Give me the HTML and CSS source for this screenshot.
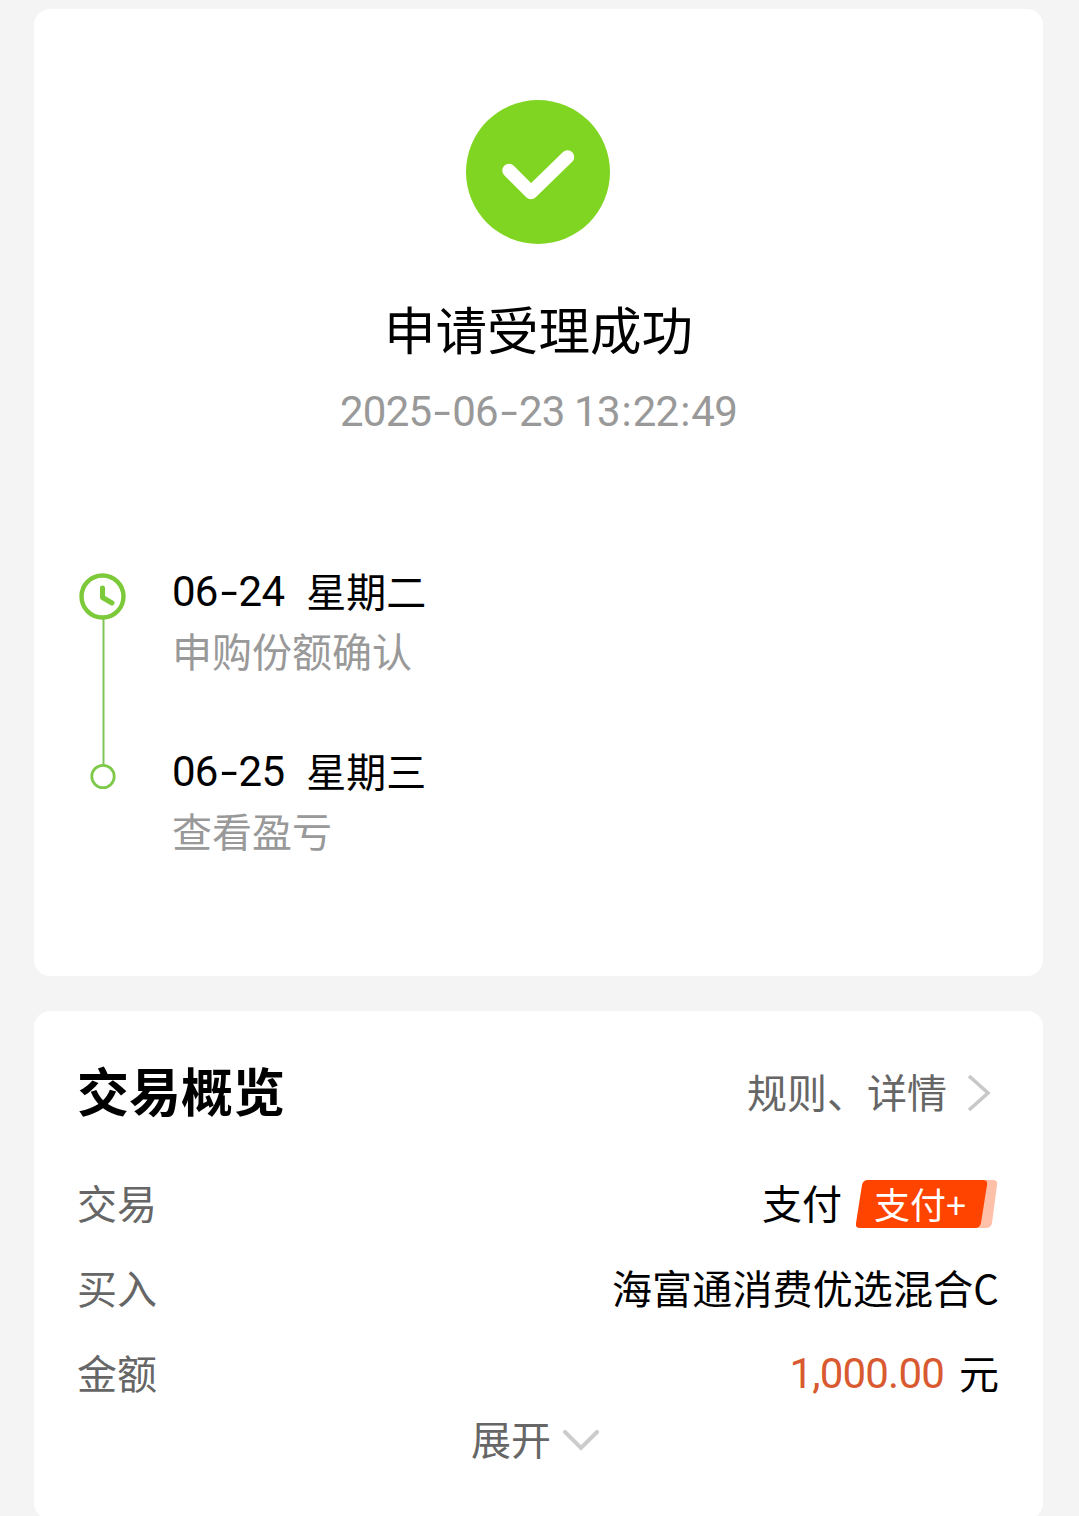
FILE: index.html
```html
<!DOCTYPE html>
<html lang="zh-CN">
<head>
    <meta charset="UTF-8">
    <title>申请受理成功</title>
    <link rel="stylesheet" href="styles.css">
</head>
<body>
<div class="page">
    <!-- 受理结果 -->
    <div class="card result">
        <svg class="success" viewBox="0 0 144 144">
            <circle cx="72" cy="72" r="72" fill="#80d522"/>
            <path d="M43 70.500L65 92.500L101.500 57" fill="none" stroke="#fff" stroke-width="13.500" stroke-linecap="round" stroke-linejoin="round"/>
        </svg>
        <h1 class="title">申请受理成功</h1>
        <p class="time num">2025<span class="dash">-</span>06<span class="dash">-</span>23 13<span class="colon">:</span>22<span class="colon">:</span>49</p>

        <!-- 进度 -->
        <div class="steps">
            <svg class="track" viewBox="0 0 48 218">
                <path d="M24.500 46V192" stroke="#7fc555" stroke-width="2"/>
                <circle cx="23.500" cy="23.500" r="21" fill="none" stroke="#7cc93a" stroke-width="4.400"/>
                <path d="M23.500 15V24.500L33 30" fill="none" stroke="#7cc93a" stroke-width="5" stroke-linecap="round" stroke-linejoin="round"/>
                <circle cx="24" cy="203.500" r="11.200" fill="none" stroke="#7fc94a" stroke-width="2.800"/>
            </svg>
            <ul class="list">
                <li>
                    <p class="day"><span class="num">06<span class="dash">-</span>24</span><span>星期二</span></p>
                    <p class="desc">申购份额确认</p>
                </li>
                <li>
                    <p class="day"><span class="num">06<span class="dash">-</span>25</span><span>星期三</span></p>
                    <p class="desc">查看盈亏</p>
                </li>
            </ul>
        </div>
    </div>

    <!-- 交易概览 -->
    <div class="card overview">
        <div class="head">
            <h2>交易概览</h2>
            <a class="more">规则、详情
                <svg class="arrow" viewBox="0 0 24 38"><path d="M2 2L21 19L2 36" fill="none" stroke="#c8c8c8" stroke-width="3.600"/></svg>
            </a>
        </div>
        <div class="row">
            <span class="label">交易</span>
            <span class="value">支付
                <span class="badge">
                    <svg class="badge-bg" viewBox="0 0 142 49">
                        <path d="M20 0H137Q142 0 141 5L136 43Q135 48 130 48H20Z" fill="#ffc0aa"/>
                        <path d="M12 0H127Q132 0 131 5L125 43Q124 48 119 48H4Q-1 48 0 43L6 5Q7 0 12 0Z" fill="#ff4400"/>
                    </svg>
                    <span class="badge-text">支付+</span>
                </span>
            </span>
        </div>
        <div class="row">
            <span class="label">买入</span>
            <span class="value fund">海富通消费优选混合C</span>
        </div>
        <div class="row">
            <span class="label">金额</span>
            <span class="value"><span class="money num">1,000.00</span>元</span>
        </div>
        <div class="expand">展开
            <svg class="down" viewBox="0 0 36 22"><path d="M2 2L18 18L34 2" fill="none" stroke="#ccc" stroke-width="4" stroke-linecap="round"/></svg>
        </div>
    </div>
</div>
</body>
</html>
```
FILE: styles.css
```css
*{
    box-sizing: border-box;
    margin: 0;
    padding: 0;
}
body{
    background-color: #f4f4f4;
    color: #000;
    font-family: "Noto Sans CJK SC", sans-serif;
    font-size: 40px;
    line-height: 60px;
}
svg{
    display: block;
    flex: none;
}
.page{
    height: 1516px;
    padding: 9px 36px 0 34px;
    overflow: hidden;
}
.card{
    background-color: #fff;
    border-radius: 16px;
}
.num{
    font-family: Roboto, "Noto Sans CJK SC", sans-serif;
    font-size: 42px;
    letter-spacing: -0.8px;
    line-height: 64px;
}

/* 受理结果 */
.result{
    height: 967px;
    padding: 91px 45px 0;
}
.success{
    width: 144px;
    height: 144px;
    margin: 0 auto;
    position: relative;
    left: -1px;
}
.title{
    margin-top: 44px;
    font-size: 51.5px;
    font-weight: 400;
    line-height: 80px;
    text-align: center;
}
.time{
    margin-top: 12px;
    color: #999;
    text-align: center;
    white-space: nowrap;
}
.dash{
    display: inline-block;
    width: 21px;
    text-align: center;
    transform: scaleX(1.45);
}
.colon{
    display: inline-block;
    width: 13px;
    text-align: center;
}
.steps{
    display: flex;
    margin-top: 116px;
}
.track{
    width: 48px;
    height: 218px;
    margin-top: 13px;
}
.list{
    margin-left: 45px;
    list-style: none;
}
.list li{
    height: 180px;
}
.day{
    display: flex;
    gap: 22px;
    height: 60px;
}
.desc{
    color: #999;
}

/* 交易概览 */
.overview{
    height: 508px;
    margin-top: 35px;
    padding: 39px 44px 0 43px;
}
.head{
    display: flex;
    justify-content: space-between;
    align-items: center;
    height: 80px;
    margin-bottom: 42px;
}
.head h2{
    font-size: 52px;
    font-weight: 700;
}
.more{
    display: flex;
    align-items: center;
    gap: 20px;
    padding: 2px 8px 0 0;
    color: #666;
}
.arrow{
    width: 24px;
    height: 38px;
    margin-top: 3px;
}
.row{
    display: flex;
    justify-content: space-between;
    height: 85px;
}
.label{
    color: #666;
}
.value{
    display: flex;
}
.fund{
    letter-spacing: 0.15px;
}
.badge{
    position: relative;
    width: 142px;
    height: 49px;
    margin: 8px 1px 0 14px;
}
.badge-bg{
    width: 142px;
    height: 49px;
}
/* 文字盖在底图上 */
.badge-text{
    position: absolute;
    left: 18px;
    top: 0;
    color: #fff;
    font-size: 36px;
    line-height: 46px;
    white-space: nowrap;
}
.money{
    margin-right: 15px;
    color: #d95a30;
}
.expand{
    display: flex;
    justify-content: center;
    align-items: center;
    gap: 12px;
    margin-top: -19px;
    padding-right: 6px;
    color: #666;
}
.down{
    width: 36px;
    height: 22px;
    margin-top: 6px;
}
```
